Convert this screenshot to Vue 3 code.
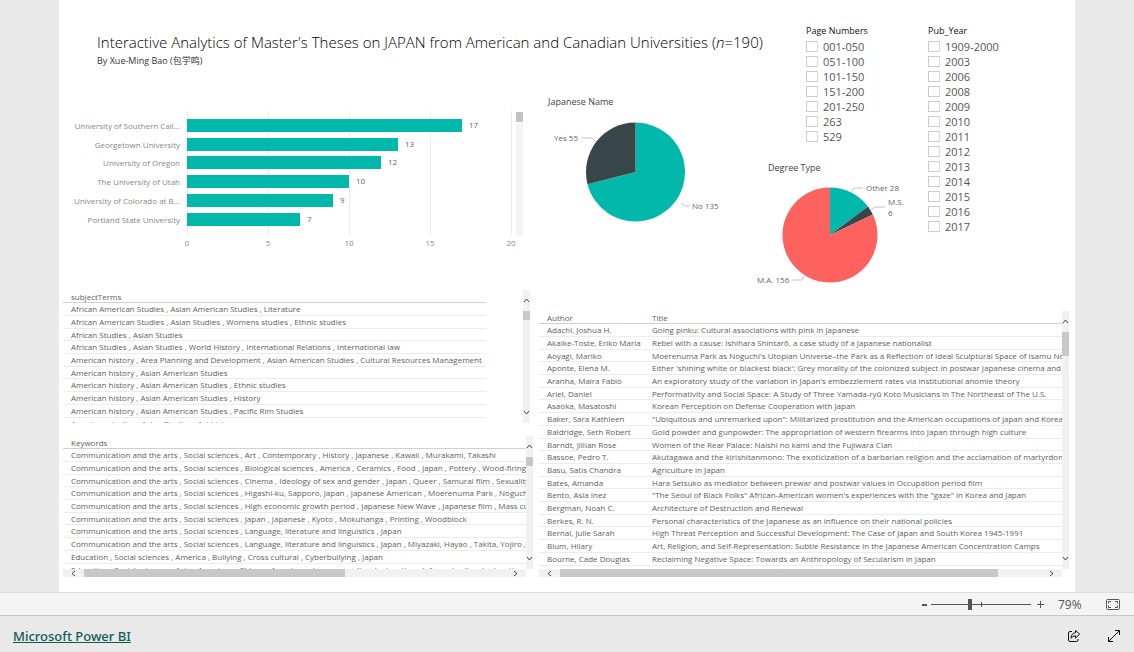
<script setup>
const universities = [
  ['University of Southern Cali...', 17],
  ['Georgetown University', 13],
  ['University of Oregon', 12],
  ['The University of Utah', 10],
  ['University of Colorado at B...', 9],
  ['Portland State University', 7],
]
const ticks = [0, 5, 10, 15, 20]
const plotLeft = 121
const plotWidth = 324
const scaleX = (v) => plotLeft + Math.round((v * plotWidth) / 20)
const bars = universities.map(([name, count], i) => ({
  name,
  count,
  y: 14 + Math.round(i * 18.7),
  width: scaleX(count) - plotLeft,
}))

const slice = (cx, cy, r, from, to) => {
  const point = (f) => {
    const a = f * 2 * Math.PI
    return `${(cx + r * Math.sin(a)).toFixed(2)} ${(cy - r * Math.cos(a)).toFixed(2)}`
  }
  return `M${cx} ${cy}L${point(from)}A${r} ${r} 0 ${to - from > 0.5 ? 1 : 0} 1 ${point(to)}Z`
}
const nameSlices = [
  { color: '#01b8aa', d: slice(89.5, 60, 49.5, 0, 135 / 190) },
  { color: '#374649', d: slice(89.5, 60, 49.5, 135 / 190, 1) },
]
const degreeSlices = [
  { color: '#01b8aa', d: slice(74, 57, 47.5, 0, 28 / 190) },
  { color: '#374649', d: slice(74, 57, 47.5, 28 / 190, 34 / 190) },
  { color: '#fd625e', d: slice(74, 57, 47.5, 34 / 190, 1) },
]

const pageNumbers = ['001-050', '051-100', '101-150', '151-200', '201-250', '263', '529']
const years = ['1909-2000', '2003', '2006', '2008', '2009', '2010', '2011', '2012', '2013', '2014', '2015', '2016', '2017']

const subjects = [
  'African American Studies , Asian American Studies , Literature',
  'African American Studies , Asian Studies , Womens studies , Ethnic studies',
  'African Studies , Asian Studies',
  'African Studies , Asian Studies , World History , International Relations , International law',
  'American history , Area Planning and Development , Asian American Studies , Cultural Resources Management',
  'American history , Asian American Studies',
  'American history , Asian American Studies , Ethnic studies',
  'American history , Asian American Studies , History',
  'American history , Asian American Studies , Pacific Rim Studies',
  'American studies , Asian Studies , Art history',
]
const keywords = [
  'Communication and the arts , Social sciences , Art , Contemporary , History , Japanese , Kawaii , Murakami, Takashi',
  'Communication and the arts , Social sciences , Biological sciences , America , Ceramics , Food , Japan , Pottery , Wood-firing',
  'Communication and the arts , Social sciences , Cinema , Ideology of sex and gender , Japan , Queer , Samurai film , Sexuality',
  'Communication and the arts , Social sciences , Higashi-ku, Sapporo, Japan , Japanese American , Moerenuma Park , Noguchi',
  'Communication and the arts , Social sciences , High economic growth period , Japanese New Wave , Japanese film , Mass culture',
  'Communication and the arts , Social sciences , Japan , Japanese , Kyoto , Mokuhanga , Printing , Woodblock',
  'Communication and the arts , Social sciences , Language, literature and linguistics , Japan',
  'Communication and the arts , Social sciences , Language, literature and linguistics , Japan , Miyazaki, Hayao , Takita, Yojiro ,',
  'Education , Social sciences , America , Bullying , Cross cultural , Cyberbullying , Japan',
  'Education , Social sciences , Asian American , Chinese American , Japanese cultural education , Informal cultural education',
]
const theses = [
  ['Adachi, Joshua H.', 'Going pinku: Cultural associations with pink in Japanese'],
  ['Akaike-Toste, Eriko Maria', 'Rebel with a cause: Ishihara Shintarō, a case study of a Japanese nationalist'],
  ['Aoyagi, Mariko', "Moerenuma Park as Noguchi's Utopian Universe–the Park as a Reflection of Ideal Sculptural Space of Isamu Noguchi"],
  ['Aponte, Elena M.', "Either 'shining white or blackest black': Grey morality of the colonized subject in postwar Japanese cinema and"],
  ['Aranha, Maira Fabio', "An exploratory study of the variation in Japan's embezzlement rates via institutional anomie theory"],
  ['Ariel, Daniel', 'Performativity and Social Space: A Study of Three Yamada-ryū Koto Musicians in The Northeast of The U.S.'],
  ['Asaoka, Masatoshi', 'Korean Perception on Defense Cooperation with Japan'],
  ['Baker, Sara Kathleen', '"Ubiquitous and unremarked upon": Militarized prostitution and the American occupations of Japan and Korea'],
  ['Baldridge, Seth Robert', 'Gold powder and gunpowder: The appropriation of western firearms into Japan through high culture'],
  ['Barndt, Jillian Rose', 'Women of the Rear Palace: Naishi no kami and the Fujiwara Clan'],
  ['Bassoe, Pedro T.', 'Akutagawa and the kirishitanmono: The exoticization of a barbarian religion and the acclamation of martyrdom'],
  ['Basu, Satis Chandra', 'Agriculture in Japan'],
  ['Bates, Amanda', 'Hara Setsuko as mediator between prewar and postwar values in Occupation period film'],
  ['Bento, Asia Inez', '"The Seoul of Black Folks" African-American women\'s experiences with the "gaze" in Korea and Japan'],
  ['Bergman, Noah C.', 'Architecture of Destruction and Renewal'],
  ['Berkes, R. N.', 'Personal characteristics of the Japanese as an influence on their national policies'],
  ['Bernal, Julie Sarah', 'High Threat Perception and Successful Development: The Case of Japan and South Korea 1945-1991'],
  ['Blum, Hilary', 'Art, Religion, and Self-Representation: Subtle Resistance in the Japanese American Concentration Camps'],
  ['Bourne, Cade Douglas', 'Reclaiming Negative Space: Towards an Anthropology of Secularism in Japan'],
]
const thumb = { subjects: 10, keywords: 10, keywordsAcross: 62, theses: 11, thesesAcross: 91 }
</script>

<template>
  <div class="page">
    <div class="canvas">
      <main class="report">
        <section class="top">
          <div class="lead">
            <h1>Interactive Analytics of Master's Theses on JAPAN from American and Canadian Universities (<i>n</i>=190)</h1>
            <p class="byline">By Xue-Ming Bao (<span lang="zh">包学鸣</span>)</p>
            <div class="charts">
              <svg class="bars" width="466" height="150" viewBox="0 0 466 150" role="img" aria-label="Theses by university">
                <rect v-for="t in ticks" :key="t" class="grid" :x="scaleX(t)" y="6" width="1" height="124" />
                <g v-for="b in bars" :key="b.name">
                  <text class="name" x="114" :y="b.y + 10" text-anchor="end">{{ b.name }}</text>
                  <rect class="bar" :x="plotLeft" :y="b.y" :width="b.width" height="13" />
                  <text class="count" :x="plotLeft + b.width + 7" :y="b.y + 9">{{ b.count }}</text>
                </g>
                <text v-for="t in ticks" :key="'t' + t" class="name" :x="scaleX(t)" y="141" text-anchor="middle">{{ t }}</text>
                <rect x="450" y="18" width="7" height="112" fill="#f4f4f4" />
                <rect x="450" y="7" width="7" height="10" fill="#c2c2c2" />
              </svg>
              <section class="pie">
                <h2>Japanese Name</h2>
                <svg width="200" height="115" viewBox="0 0 200 115" role="img" aria-label="Japanese Name">
                  <path v-for="s in nameSlices" :key="s.color" :d="s.d" :fill="s.color" />
                  <path class="leader" d="M36 26H46L50 30M135 91L139 94H144" />
                  <text class="count" x="8" y="29">Yes 55</text>
                  <text class="count" x="146" y="97">No 135</text>
                </svg>
              </section>
            </div>
          </div>
          <div class="middle">
            <fieldset class="slicer pages">
              <legend>Page Numbers</legend>
              <label v-for="p in pageNumbers" :key="p"><input type="checkbox" />{{ p }}</label>
            </fieldset>
            <section class="pie degree">
              <h2>Degree Type</h2>
              <svg width="160" height="112" viewBox="0 0 160 112" role="img" aria-label="Degree Type">
                <path v-for="s in degreeSlices" :key="s.color" :d="s.d" :fill="s.color" />
                <path class="leader" d="M95 14L98 10H107M115 32L119 29H129M36 102H46L49 97" />
                <text class="count" x="110" y="13">Other 28</text>
                <text class="count" x="132" y="27">M.S.</text>
                <text class="count" x="132" y="38">6</text>
                <text class="count" x="1" y="105">M.A. 156</text>
              </svg>
            </section>
          </div>
          <fieldset class="slicer years">
            <legend>Pub_Year</legend>
            <label v-for="y in years" :key="y"><input type="checkbox" />{{ y }}</label>
          </fieldset>
        </section>

        <section class="bottom">
          <div class="stack">
            <div class="visual subjects">
              <div class="clip">
                <table>
                  <thead><tr><th>subjectTerms</th></tr></thead>
                  <tbody><tr v-for="s in subjects" :key="s"><td>{{ s }}</td></tr></tbody>
                </table>
              </div>
              <div class="vscroll">
                <button aria-label="Scroll up"><svg width="7" height="7" viewBox="0 0 7 7"><path d="M1 5L3.5 2L6 5" /></svg></button>
                <div class="track"><div class="thumb" :style="{ height: thumb.subjects + '%' }"></div></div>
                <button aria-label="Scroll down"><svg width="7" height="7" viewBox="0 0 7 7"><path d="M1 2L3.5 5L6 2" /></svg></button>
              </div>
            </div>
            <div class="visual keywords">
              <div class="clip">
                <table>
                  <thead><tr><th>Keywords</th></tr></thead>
                  <tbody><tr v-for="k in keywords" :key="k"><td>{{ k }}</td></tr></tbody>
                </table>
              </div>
              <div class="vscroll">
                <button aria-label="Scroll up"><svg width="7" height="7" viewBox="0 0 7 7"><path d="M1 5L3.5 2L6 5" /></svg></button>
                <div class="track"><div class="thumb" :style="{ height: thumb.keywords + '%' }"></div></div>
                <button aria-label="Scroll down"><svg width="7" height="7" viewBox="0 0 7 7"><path d="M1 2L3.5 5L6 2" /></svg></button>
              </div>
              <div class="hscroll">
                <button aria-label="Scroll left"><svg width="7" height="7" viewBox="0 0 7 7"><path d="M5 1L2 3.5L5 6" /></svg></button>
                <div class="track"><div class="thumb" :style="{ width: thumb.keywordsAcross + '%' }"></div></div>
                <button aria-label="Scroll right"><svg width="7" height="7" viewBox="0 0 7 7"><path d="M2 1L5 3.5L2 6" /></svg></button>
              </div>
            </div>
          </div>
          <div class="visual theses">
            <div class="clip">
              <table>
                <thead><tr><th class="author">Author</th><th>Title</th></tr></thead>
                <tbody><tr v-for="t in theses" :key="t[0]"><td>{{ t[0] }}</td><td>{{ t[1] }}</td></tr></tbody>
              </table>
            </div>
            <div class="vscroll">
              <button aria-label="Scroll up"><svg width="7" height="7" viewBox="0 0 7 7"><path d="M1 5L3.5 2L6 5" /></svg></button>
              <div class="track"><div class="thumb" :style="{ height: thumb.theses + '%' }"></div></div>
              <button aria-label="Scroll down"><svg width="7" height="7" viewBox="0 0 7 7"><path d="M1 2L3.5 5L6 2" /></svg></button>
            </div>
            <div class="hscroll">
              <button aria-label="Scroll left"><svg width="7" height="7" viewBox="0 0 7 7"><path d="M5 1L2 3.5L5 6" /></svg></button>
              <div class="track"><div class="thumb" :style="{ width: thumb.thesesAcross + '%' }"></div></div>
              <button aria-label="Scroll right"><svg width="7" height="7" viewBox="0 0 7 7"><path d="M2 1L5 3.5L2 6" /></svg></button>
            </div>
          </div>
        </section>
      </main>
    </div>

    <div class="zoombar">
      <button aria-label="Zoom out"><svg width="5" height="11" viewBox="0 0 5 11"><path d="M0 6H5" stroke="#555" stroke-width="2" /></svg></button>
      <input class="zoom" type="range" min="0" max="100" value="39" aria-label="Zoom level" />
      <button aria-label="Zoom in"><svg width="9" height="11" viewBox="0 0 9 11"><path d="M1 5.5H8M4.5 2V9" stroke="#555" /></svg></button>
      <span class="level">79%</span>
      <button class="fit" aria-label="Fit to page">
        <svg width="14" height="11" viewBox="0 0 14 11" fill="none" stroke="#555">
          <rect x=".5" y=".5" width="13" height="10" rx="1" />
          <path d="M2.5 4.5V2.5H5M9 2.5H11.5V4.5M11.5 6.5V8.5H9M5 8.5H2.5V6.5" />
        </svg>
      </button>
    </div>

    <footer>
      <a href="#">Microsoft Power BI</a>
      <div class="actions">
        <button aria-label="Share">
          <svg width="14" height="14" viewBox="0 0 14 14" fill="none" stroke="#111">
            <path d="M5 2.500H3Q1.500 2.500 1.500 4V11Q1.500 12.500 3 12.500H9.500Q11 12.500 11 11V10" />
            <path d="M8.500 1.500L12.700 5.200L8.500 9V6.800Q5.500 6.600 4 9.300Q4.200 4.200 8.500 3.700Z" stroke-linejoin="round" />
          </svg>
        </button>
        <button aria-label="Full screen">
          <svg width="14" height="14" viewBox="0 0 14 14" fill="none" stroke="#111">
            <path d="M1.500 12.500L12.500 1.500M8 1.500H12.500V6M1.500 8V12.500H6" />
          </svg>
        </button>
      </div>
    </footer>
  </div>
</template>

<style>
body { margin: 0; }
</style>

<style scoped>
.page {
  display: flex;
  flex-direction: column;
  min-height: 100vh;
  background: #e9e9e9;
  color: #555;
  font-family: "Open Sans", "Noto Sans", "Noto Sans CJK SC", sans-serif;
  font-size: 8px;
}
.page * { box-sizing: border-box; }
button { padding: 0; border: 0; background: none; display: flex; align-items: center; justify-content: center; }
.canvas { flex: 1; display: flex; padding: 0 59px; }
.report { flex: 1; min-width: 0; background: #fff; padding-bottom: 15px; }
.top { display: grid; grid-template-columns: minmax(0, 1fr) 164px 155px; height: 290px; }
.lead { padding-top: 32px; }
h1 { margin: 0 0 0 38px; font-size: 15px; line-height: 20px; font-weight: 300; color: #000; white-space: nowrap; }
.byline { margin: 0 0 0 38px; font-size: 9px; line-height: 18px; color: #333; }
.charts { display: flex; gap: 14px; padding: 22px 0 0 7px; }
.bars { margin-top: 13px; flex: none; }
.pie h2 { margin: 0 0 0 2px; font-size: 9px; line-height: 20px; font-weight: 400; color: #444; }
.pie svg { display: block; }
.name { font-size: 8px; fill: #888; }
.count { font-size: 8px; fill: #666; }
.grid { fill: #ebebeb; }
.bar { fill: #01b8aa; }
.leader { fill: none; stroke: #c4c4c4; }
.middle { padding-top: 22px; }
.slicer { margin: 0; border: 0; min-width: 0; padding: 0; }
.pages { padding-left: 50px; }
.years { margin-top: 22px; padding-left: 8px; }
.slicer legend { padding: 0; font-size: 9px; line-height: 17px; color: #111; }
.slicer label { display: flex; align-items: center; gap: 5px; height: 15px; font-size: 11px; line-height: 15px; color: #555; }
.slicer input { appearance: none; width: 12px; height: 11px; margin: 0; border: 1px solid #ccc; border-right-color: #ecd3cc; background: #fff; }
.degree { margin-top: 14px; }
.degree h2 { margin-left: 12px; }

.bottom { display: grid; grid-template-columns: 470fr 530fr; gap: 6px; padding: 0 6px 0 4px; align-items: end; }
.visual { display: grid; grid-template-columns: minmax(0, 1fr) 7px; }
.subjects { padding-right: 3px; margin-bottom: 13px; }
.subjects .clip { height: 133px; }
.subjects table { width: 92%; }
.keywords .clip { height: 133px; }
.theses .clip { height: 258px; }
.clip { overflow: hidden; }
table { width: 100%; border-collapse: separate; border-spacing: 0; }
th, td { padding: 0 0 0 8px; text-align: left; font-weight: 400; white-space: nowrap; line-height: 11px; color: #605e5c; border-bottom: 1px solid #ececec; height: 13px; }
td { padding-top: 1px; line-height: 10px; vertical-align: top; }
.theses table, .keywords table { table-layout: fixed; }
.keywords td { overflow: hidden; }
th.author { width: 105px; }
th { border-bottom-color: #d0d0d0; }
tbody tr:nth-child(10n + 3) td, tbody tr:nth-child(10n + 6) td, tbody tr:nth-child(10n) td { height: 12px; }
.vscroll { display: flex; flex-direction: column; background: #f1f1f1; }
.vscroll button { height: 21px; }
.hscroll { display: flex; height: 8px; background: #f1f1f1; }
.hscroll button { width: 21px; }
.track { flex: 1; min-width: 0; }
.track .thumb { background: #c8c8c8; }
.hscroll .thumb { height: 100%; }
.vscroll path, .hscroll path { fill: none; stroke: #444; stroke-width: 1; }

.zoombar { display: flex; align-items: center; justify-content: flex-end; height: 24px; padding-right: 14px; background: #f4f4f4; border-top: 1px solid #dcdcdc; border-bottom: 1px solid #c6c6c6; }
.zoom { appearance: none; width: 100px; height: 11px; margin: 0 5px 0 4px; background: linear-gradient(#555, #555) 50% 50% / 1px 5px no-repeat, linear-gradient(#555, #555) 50% 50% / 100% 1px no-repeat; }
.zoom::-webkit-slider-thumb { appearance: none; width: 4px; height: 11px; background: #555; }
.level { margin-left: 13px; width: 48px; font-size: 12px; }
footer { display: flex; align-items: center; justify-content: space-between; height: 36px; padding: 4px 13px 0; }
footer a { color: #0f5c55; font-family: "Noto Sans", "Open Sans", sans-serif; font-size: 13px; font-weight: 500; }
.actions { display: flex; gap: 26px; }
</style>
